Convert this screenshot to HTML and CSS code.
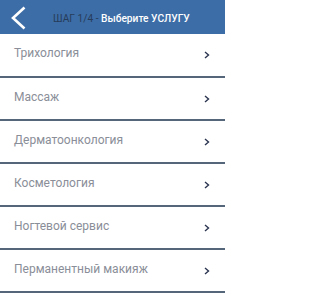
FILE: index.html
```html
<!DOCTYPE html>
<html lang="ru">
<head>
<meta charset="utf-8">
<link rel="stylesheet" href="styles.css">
</head>
<body>
<div class="page">
<header class="topbar">
  <svg class="back" width="18" height="24" viewBox="0 0 18 24"><path d="M14.5 1.5 L3 12 L14.5 22.5" fill="none" stroke="#fff" stroke-width="2.6"/></svg>
  <div class="title"><span class="step">ШАГ 1/4 -</span> <span class="choose">Выберите УСЛУГУ</span></div>
</header>
<ul class="list">
  <li class="item"><span>Трихология</span><svg class="chev" width="6" height="8" viewBox="0 0 6 8"><path d="M1 1 L4.5 4 L1 7" fill="none" stroke="#2b3550" stroke-width="1.4"/></svg></li>
  <li class="item"><span>Массаж</span><svg class="chev" width="6" height="8" viewBox="0 0 6 8"><path d="M1 1 L4.5 4 L1 7" fill="none" stroke="#2b3550" stroke-width="1.4"/></svg></li>
  <li class="item"><span>Дерматоонкология</span><svg class="chev" width="6" height="8" viewBox="0 0 6 8"><path d="M1 1 L4.5 4 L1 7" fill="none" stroke="#2b3550" stroke-width="1.4"/></svg></li>
  <li class="item"><span>Косметология</span><svg class="chev" width="6" height="8" viewBox="0 0 6 8"><path d="M1 1 L4.5 4 L1 7" fill="none" stroke="#2b3550" stroke-width="1.4"/></svg></li>
  <li class="item"><span>Ногтевой сервис</span><svg class="chev" width="6" height="8" viewBox="0 0 6 8"><path d="M1 1 L4.5 4 L1 7" fill="none" stroke="#2b3550" stroke-width="1.4"/></svg></li>
  <li class="item"><span>Перманентный макияж</span><svg class="chev" width="6" height="8" viewBox="0 0 6 8"><path d="M1 1 L4.5 4 L1 7" fill="none" stroke="#2b3550" stroke-width="1.4"/></svg></li>
</ul>
</div>
</body>
</html>
```
FILE: styles.css
```css
html, body {
  margin: 0;
  padding: 0;
  background: #fff;
  font-family: Roboto, "Noto Sans", sans-serif;
}
.page {
  width: 225px;
}
.topbar {
  height: 34px;
  background: #3d6da6;
  display: flex;
  align-items: center;
  padding-left: 10px;
  box-sizing: border-box;
}
.back {
  display: block;
  margin-top: 1px;
}
.title {
  margin-left: 25px;
  font-size: 10.2px;
  white-space: nowrap;
  margin-top: 2px;
}
.step {
  color: #263c5a;
}
.choose {
  color: #fff;
  font-weight: 500;
}
.list {
  list-style: none;
  margin: 0;
  padding: 0;
}
.item {
  height: 43px;
  box-sizing: border-box;
  border-bottom: 2px solid #56667a;
  display: flex;
  align-items: center;
  justify-content: space-between;
  padding: 0 15px 0 14px;
  font-size: 12px;
  color: #8a8e98;
}
.item:first-child {
  height: 44px;
}
.item span {
  margin-top: -4px;
}
.chev {
  display: block;
}
```
